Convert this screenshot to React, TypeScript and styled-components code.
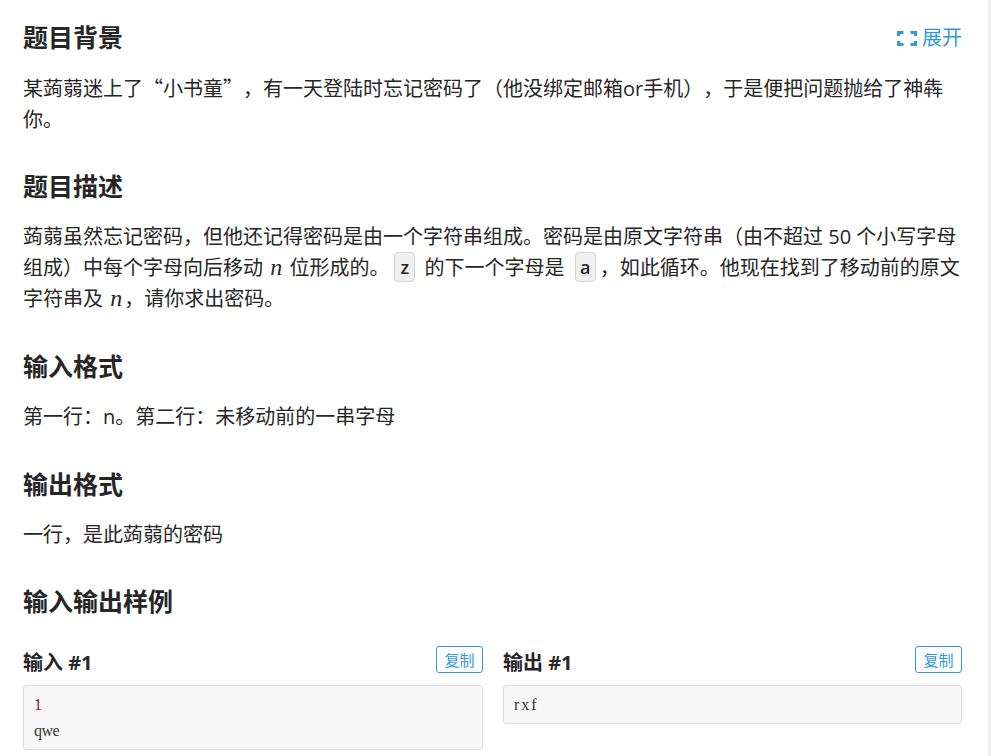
import React from "react";
import styled, { createGlobalStyle } from "styled-components";

const GlobalStyle = createGlobalStyle`
  html, body {
    margin: 0;
    padding: 0;
    background: #fff;
    overflow: hidden;
  }
  body {
    font-family: "Open Sans", "Noto Sans CJK SC", sans-serif;
    color: #262626;
    text-spacing-trim: space-all;
  }
`;

const Page = styled.div`
  width: 991px;
  height: 756px;
  overflow: hidden;
  box-sizing: border-box;
  border-right: 3px solid #eeeeee;
  padding: 0 26px 0 23px;
`;

const Section = styled.section<{ $gap?: number }>`
  margin-bottom: ${(p) => p.$gap ?? 32}px;
`;

const TitleRow = styled.div`
  display: flex;
  justify-content: space-between;
  align-items: flex-start;
  padding-top: 18px;
  margin-bottom: 14px;
`;

const Heading = styled.h2`
  margin: 0;
  font-size: 25px;
  line-height: 38px;
  font-weight: 700;
  color: #262626;
`;

const ExpandLink = styled.a`
  display: flex;
  align-items: center;
  gap: 5px;
  color: #3498db;
  font-size: 20px;
  line-height: 40px;
`;

const Paragraph = styled.p`
  margin: 16px 0 0;
  font-size: 20px;
  line-height: 31px;

  ${TitleRow} + & {
    margin-top: 0;
  }
`;

const Quote = styled.span`
  font-family: "Noto Sans CJK SC", sans-serif;
`;

const InlineCode = styled.code`
  display: inline-block;
  box-sizing: border-box;
  min-width: 21px;
  height: 30px;
  font-family: "Open Sans", "Noto Sans CJK SC", sans-serif;
  font-size: 18px;
  font-weight: 600;
  line-height: 28px;
  text-align: center;
  vertical-align: top;
  margin: 0 4px 0 5px;
  background: #f0f0f0;
  border: 1px solid #d4d4d4;
  border-radius: 4px;
`;

const MathVar = styled.i`
  font-family: "Liberation Serif", serif;
  font-size: 24px;
  line-height: 1;
  margin: 0 2px;
`;

const SampleGrid = styled.div`
  display: grid;
  grid-template-columns: 460px 459px;
  gap: 20px;
  align-items: start;
  margin-top: 26px;
`;

const SampleHead = styled.div`
  display: flex;
  justify-content: space-between;
  align-items: center;
  height: 27px;
  margin-bottom: 12px;
`;

const SampleTitle = styled.h3`
  margin: 0;
  padding-top: 4px;
  font-size: 20px;
  font-weight: 700;
`;

const CopyButton = styled.button`
  width: 47px;
  height: 27px;
  padding: 0;
  box-sizing: border-box;
  background: #fff;
  color: #3498db;
  font-family: inherit;
  font-size: 15px;
  border: 1px solid #3498db;
  border-radius: 3px;
`;

const CodeBlock = styled.pre`
  margin: 0;
  padding: 6px 10px 5px;
  background: #f7f7f7;
  border: 1px solid #dddddd;
  border-radius: 3px;
  font-family: "Liberation Serif", serif;
  font-size: 16px;
  line-height: 26px;
  color: #333;
`;

const CodeLine = styled.div<{ $spacing: number }>`
  letter-spacing: ${(p) => p.$spacing}px;
`;

const NumberToken = styled.span`
  color: #8f1440;
`;

const ExpandIcon = () => (
  <svg width="20" height="15" viewBox="0 0 20 15" fill="none" stroke="#3498db" strokeWidth="3">
    <path d="M6.5 1.5H1.5V5M13.5 1.5H18.5V5M1.5 10V13.5H6.5M18.5 10V13.5H13.5" />
  </svg>
);

const SampleColumn: React.FC<{ title: string; children: React.ReactNode }> = ({ title, children }) => (
  <div>
    <SampleHead>
      <SampleTitle>{title}</SampleTitle>
      <CopyButton>复制</CopyButton>
    </SampleHead>
    <CodeBlock>{children}</CodeBlock>
  </div>
);

export default function App() {
  return (
    <Page lang="zh-CN">
      <GlobalStyle />
      <Section>
        <TitleRow>
          <Heading>题目背景</Heading>
          <ExpandLink>
            <ExpandIcon />
            展开
          </ExpandLink>
        </TitleRow>
        <Paragraph>
          某蒟蒻迷上了<Quote>“</Quote>小书童<Quote>”</Quote>，有一天登陆时忘记密码了（他没绑定邮箱or手机），于是便把问题抛给了神犇你。
        </Paragraph>
      </Section>
      <Section $gap={33}>
        <Heading>题目描述</Heading>
        <Paragraph>
          蒟蒻虽然忘记密码，但他还记得密码是由一个字符串组成。密码是由原文字符串（由不超过 50 个小写字母组成）中每个字母向后移动 <MathVar>n</MathVar> 位形成的。
          <InlineCode>z</InlineCode> 的下一个字母是 <InlineCode>a</InlineCode>
          ，如此循环。他现在找到了移动前的原文字符串及 <MathVar>n</MathVar>，请你求出密码。
        </Paragraph>
      </Section>
      <Section $gap={33}>
        <Heading>输入格式</Heading>
        <Paragraph>第一行：n。第二行：未移动前的一串字母</Paragraph>
      </Section>
      <Section>
        <Heading>输出格式</Heading>
        <Paragraph>一行，是此蒟蒻的密码</Paragraph>
      </Section>
      <Heading>输入输出样例</Heading>
      <SampleGrid>
        <SampleColumn title="输入 #1">
          <CodeLine $spacing={-0.5}>
            <NumberToken>1</NumberToken>
          </CodeLine>
          <CodeLine $spacing={-0.5}>qwe</CodeLine>
        </SampleColumn>
        <SampleColumn title="输出 #1">
          <CodeLine $spacing={2}>rxf</CodeLine>
        </SampleColumn>
      </SampleGrid>
    </Page>
  );
}
